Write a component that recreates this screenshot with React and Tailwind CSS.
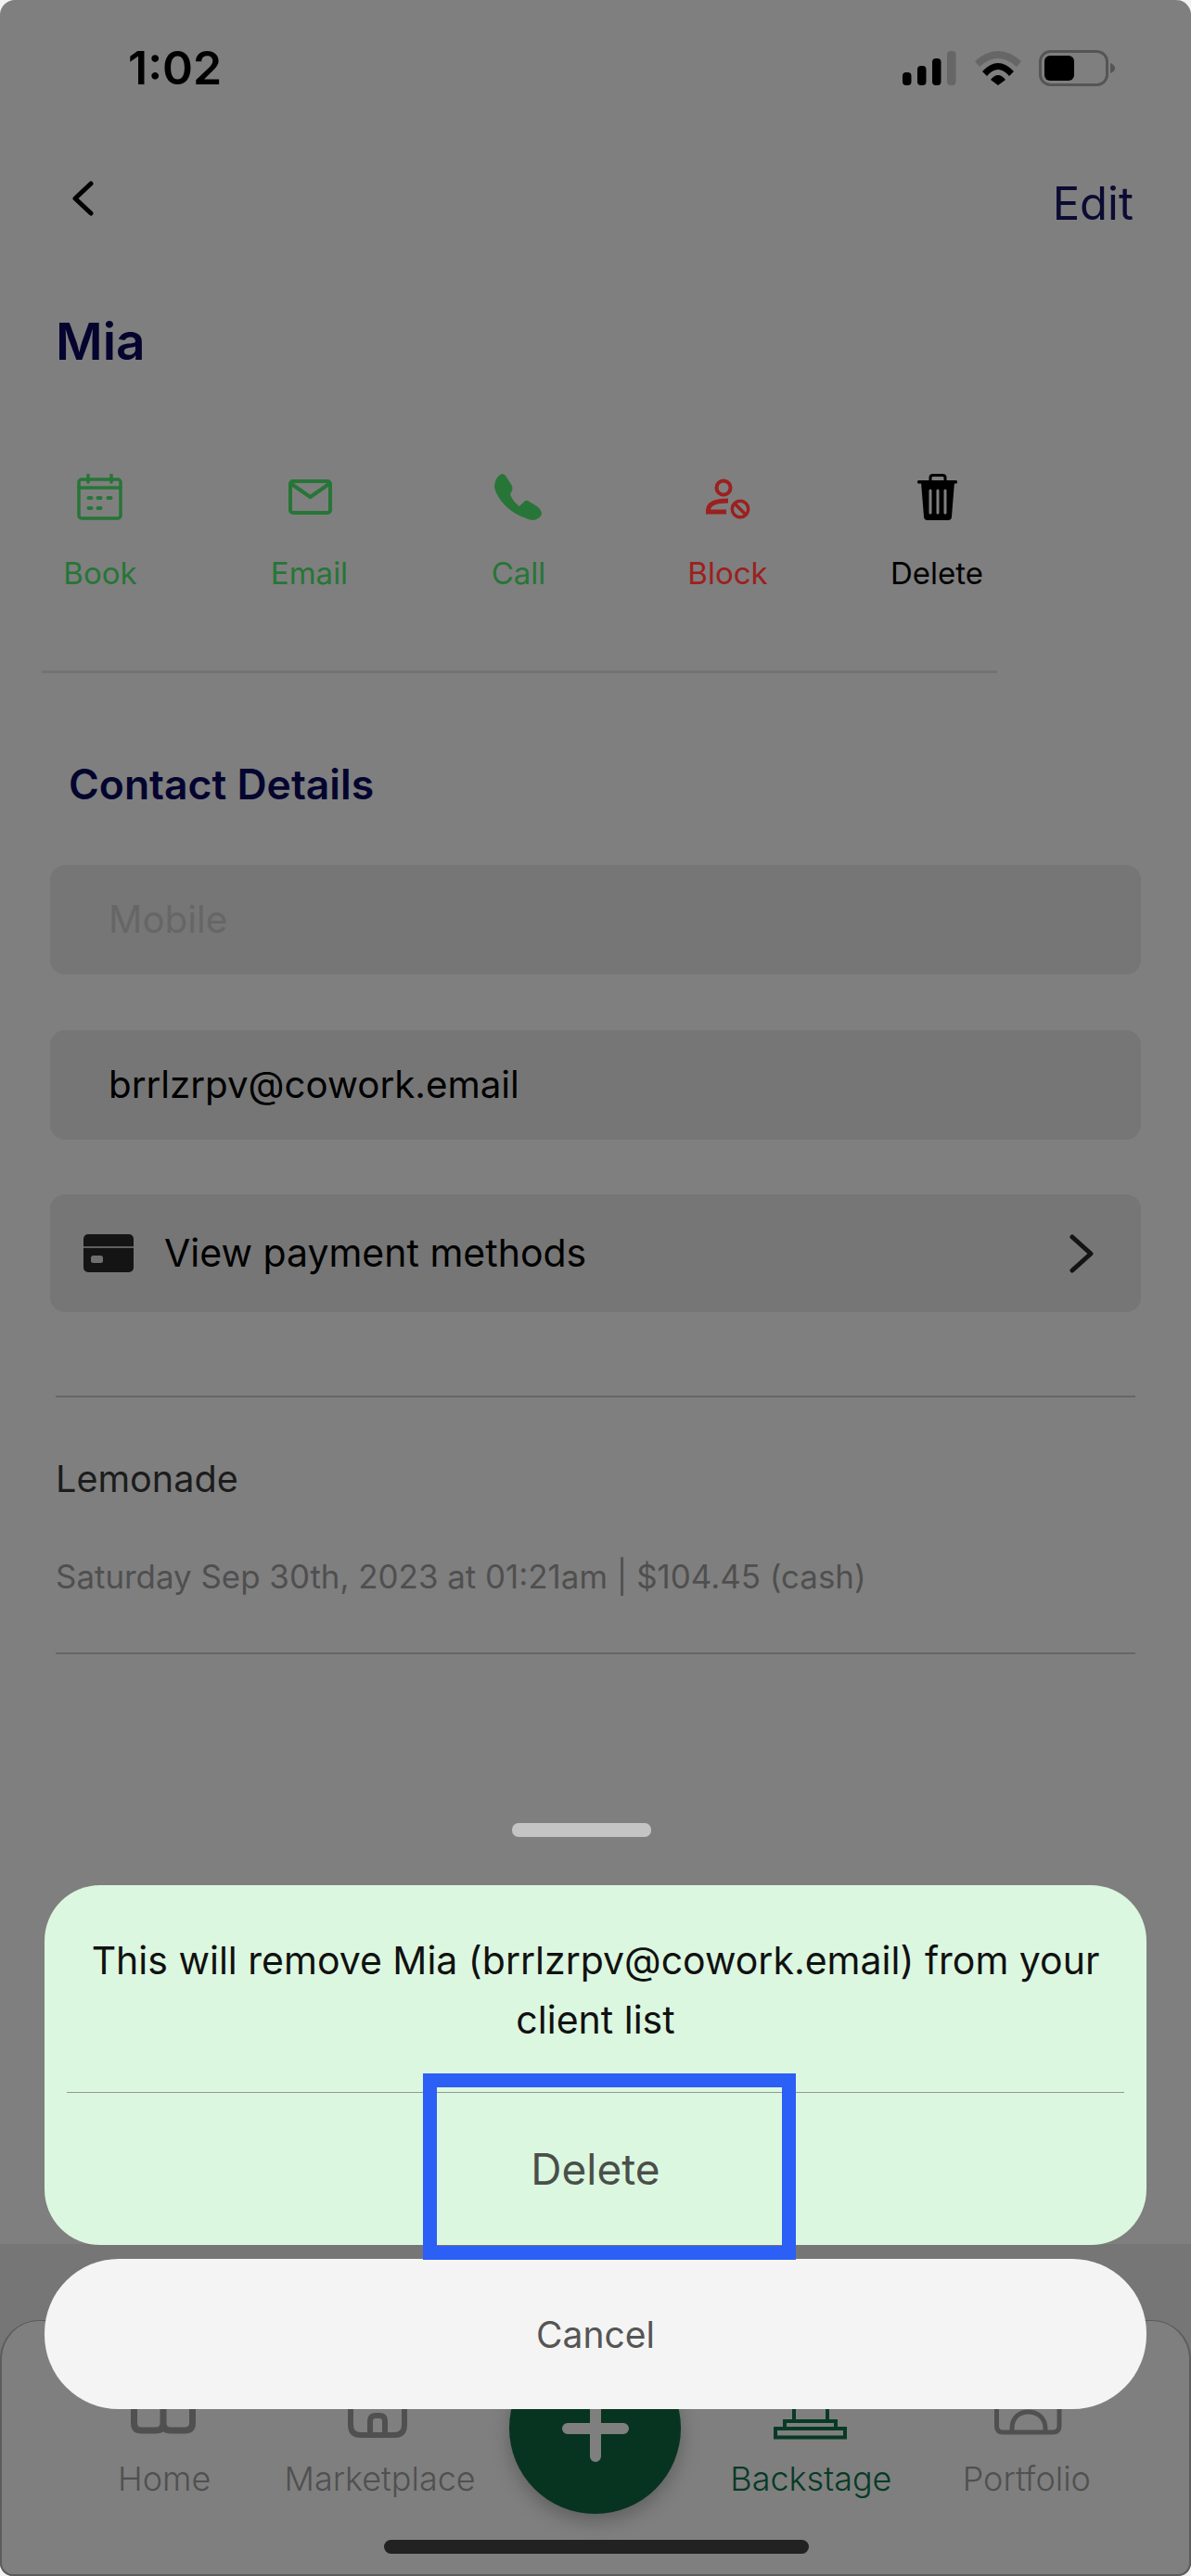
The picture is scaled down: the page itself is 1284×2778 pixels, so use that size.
const font = { fontFamily: "Inter, 'Noto Sans', sans-serif" };

function Signal() {
  return (
    <svg width="58" height="37" viewBox="0 0 58 37">
      <rect x="0" y="23" width="9.5" height="14" rx="4" fill="#000" />
      <rect x="16" y="16" width="9.5" height="21" rx="4" fill="#000" />
      <rect x="32" y="8" width="9.5" height="29" rx="4" fill="#000" />
      <rect x="48" y="0" width="9.5" height="37" rx="4" fill="#666" />
    </svg>
  );
}
function Wifi() {
  return (
    <svg width="50" height="37" viewBox="0 0 50 37">
      <path d="M0 11Q25 -11 50 11L45 17Q25 -1 5 17Z" fill="#666" />
      <path d="M8 22Q25 4 42 22L37 27Q25 13 13 27Z" fill="#000" />
      <path d="M17 31Q25 21 33 31L25 37Z" fill="#000" />
    </svg>
  );
}
function Battery() {
  return (
    <svg width="83" height="39" viewBox="0 0 83 39">
      <rect x="1.5" y="1.5" width="72" height="36" rx="11" fill="none" stroke="#555" strokeWidth="3" />
      <rect x="6" y="6" width="32" height="27" rx="6" fill="#000" />
      <path d="M77 14Q82 16 82 19.5Q82 23 77 25Z" fill="#555" />
    </svg>
  );
}
function BookIcon() {
  return (
    <svg width="50" height="50" viewBox="0 0 50 50" fill="none" stroke="#277537" strokeWidth="3.5" strokeLinecap="round">
      <rect x="2" y="6" width="45" height="42" rx="3" />
      <path d="M12 1V9M37 1V9M2 15H47" />
      <path d="M12.500 26H15.500M22.500 26H25.500M33.500 26H36.500M12.500 37H15.500M22.500 37H25.500" strokeWidth="4" />
    </svg>
  );
}
function EmailIcon() {
  return (
    <svg width="50" height="50" viewBox="0 0 50 50" fill="none" stroke="#277537" strokeWidth="4">
      <rect x="4" y="8" width="43" height="34" rx="3" />
      <path d="M4 10L25.5 25L47 10" />
    </svg>
  );
}
function CallIcon() {
  return (
    <svg width="52" height="50" viewBox="0 0 52 50">
      <path d="M8 0Q1 3 0 13C1 25 16 42 32 47Q37 50 42 50C47 49 51 46 51 42Q50 38 46 35L36 29Q33 28 31 31L27 35Q19 29 17 22L19 18Q20 16 19 13L12 2Q10 0 8 0Z" fill="#277537" />
    </svg>
  );
}
function BlockIcon() {
  return (
    <svg width="50" height="50" viewBox="0 0 50 50" fill="none" stroke="#9b2020">
      <circle cx="20" cy="15" r="7.5" strokeWidth="4" />
      <path d="M25 29Q4 29 3.5 39V41H23" strokeWidth="5" />
      <circle cx="38" cy="38" r="8.7" strokeWidth="3.5" />
      <path d="M32 32L44 44" strokeWidth="3.5" />
    </svg>
  );
}
function TrashIcon() {
  return (
    <svg width="50" height="50" viewBox="0 0 50 50">
      <path d="M18 8V4Q18 1.5 21 1.5H31Q34 1.5 34 4V8" fill="none" stroke="#000" strokeWidth="3" />
      <rect x="4" y="7" width="43" height="3.5" rx="1.5" fill="#000" />
      <path d="M8 9H44L41 46Q41 50 37 50H15Q11 50 11 46Z" fill="#000" />
      <path d="M18 18V42M26 18V42M34 18V42" stroke="#7f7f7f" strokeWidth="3" strokeLinecap="round" />
    </svg>
  );
}
function CardIcon() {
  return (
    <svg width="54" height="41" viewBox="0 0 54 41">
      <rect x="0" y="0" width="54" height="41" rx="5" fill="#141414" />
      <rect x="0" y="13" width="54" height="2" fill="#5f5f5f" />
      <rect x="8" y="23" width="13" height="8" rx="2.5" fill="#6f6f6f" />
    </svg>
  );
}
function HomeIcon() {
  return (
    <svg width="76" height="40" viewBox="0 0 76 40" fill="none" stroke="#505050" strokeWidth="7">
      <path d="M5.5 0V22Q5.5 30 13.5 30H29Q37 30 37 22V4M37 22Q37 30 45 30H60Q68.5 30 68.5 22V0" />
    </svg>
  );
}
function MarketIcon() {
  return (
    <svg width="76" height="40" viewBox="0 0 76 40" fill="none" stroke="#505050" strokeWidth="6">
      <path d="M6 0V24Q6 35 17 35H53Q64 35 64 24V0" />
      <path d="M27 35V20Q27 14 33 14H37Q43 14 43 20V35" />
    </svg>
  );
}
function BackstageIcon() {
  return (
    <svg width="84" height="40" viewBox="0 0 84 40" fill="none" stroke="#073a26" strokeWidth="4">
      <rect x="4" y="28" width="75" height="9.5" />
      <rect x="14" y="20" width="55" height="8" />
      <path d="M24 0V20M60 0V20" />
    </svg>
  );
}
function PortfolioIcon() {
  return (
    <svg width="76" height="40" viewBox="0 0 76 40" fill="none" stroke="#505050" strokeWidth="5">
      <path d="M5.5 0V25Q5.5 32 12 32H66Q73 32 73 25V0" />
      <path d="M22 32V28C22 15 31 10 39.500 10C48 10 58 15 58 28V32" />
    </svg>
  );
}

function Action({ label, color, children }) {
  return (
    <div className="flex w-[100px] flex-col items-center">
      <div className="flex h-[50px] items-center justify-center">{children}</div>
      <div className={`mt-[37px] whitespace-nowrap text-[33px] leading-[40px] ${color}`}>{label}</div>
    </div>
  );
}

function Tab({ label, color, children }) {
  return (
    <div className="flex flex-col items-center pt-[88px]">
      <div className="flex h-[40px] items-start justify-center">{children}</div>
      <div className={`mt-[20px] whitespace-nowrap text-[36px] font-light leading-[44px] ${color}`}>{label}</div>
    </div>
  );
}

export default function App() {
  return (
    <div className="relative h-[2778px] w-[1284px] overflow-hidden bg-[#f2f2f2]" style={font}>
      <div className="flex h-full flex-col overflow-hidden rounded-t-[16px] rounded-b-[14px] bg-[#7f7f7f]">
        <div className="flex h-[146px] items-center justify-between pl-[138px] pr-[81px]">
          <div className="text-[50px] font-semibold leading-none text-black">1:02</div>
          <div className="flex items-center gap-[19.5px]">
            <Signal />
            <Wifi />
            <Battery />
          </div>
        </div>

        <div className="flex h-[146px] items-center justify-between pl-[76px] pr-[62px]">
          <svg className="-mt-[10px]" width="26" height="38" viewBox="0 0 26 38" fill="none" stroke="#000" strokeWidth="5" strokeLinecap="round" strokeLinejoin="round">
            <path d="M22 3L5 19L22 35" />
          </svg>
          <div className="mt-[2px] text-[49px] leading-[60px] text-[#0b0b33]">Edit</div>
        </div>

        <div className="mt-[46px] pl-[60px] text-[55px] font-semibold leading-[60px] text-[#04042f]">Mia</div>

        <div className="mt-[113px] flex gap-[125.5px] pl-[58px]">
          <Action label="Book" color="text-[#277537]"><BookIcon /></Action>
          <Action label="Email" color="text-[#277537]"><EmailIcon /></Action>
          <Action label="Call" color="text-[#277537]"><CallIcon /></Action>
          <Action label="Block" color="text-[#9b2020]"><BlockIcon /></Action>
          <Action label="Delete" color="text-black"><TrashIcon /></Action>
        </div>

        <div className="ml-[45px] mt-[85px] h-[3px] w-[1030px] bg-[#737373]" />

        <div className="ml-[74px] mt-[95px] text-[44.500px] font-semibold leading-[50px] text-[#04042f]">Contact Details</div>

        <div className="ml-[54px] mt-[62px] flex h-[118px] w-[1176px] items-center rounded-[16px] bg-[#767676] pl-[63px] text-[40.3px] text-[#666666]">Mobile</div>
        <div className="ml-[54px] mt-[60px] flex h-[118px] w-[1176px] items-center rounded-[16px] bg-[#767676] pl-[63px] text-[40.3px] text-black">brrlzrpv@cowork.email</div>
        <div className="ml-[54px] mt-[59px] flex h-[127px] w-[1176px] items-center rounded-[16px] bg-[#767676] pl-[36px] pr-[50px] text-[41px] text-black">
          <CardIcon />
          <span className="ml-[33px] flex-1">View payment methods</span>
          <svg width="28" height="42" viewBox="0 0 28 42" fill="none" stroke="#141414" strokeWidth="5" strokeLinecap="round" strokeLinejoin="round">
            <path d="M4 3L24 21L4 39" />
          </svg>
        </div>

        <div className="ml-[60px] mt-[90px] h-[2px] w-[1164px] bg-[#666666]" />
        <div className="ml-[60px] mt-[63px] text-[39.600px] leading-[50px] text-[#1c1c1c]">Lemonade</div>
        <div className="ml-[60px] mt-[55px] text-[34.9px] leading-[50px] text-[#4f4f4f]">Saturday Sep 30th, 2023 at 01:21am | $104.45 (cash)</div>
        <div className="ml-[60px] mt-[57px] h-[2px] w-[1164px] bg-[#666666]" />

        <div className="mt-auto bg-[#767676] pt-[82px]">
          <div className="grid h-[276px] grid-cols-5 rounded-t-[42px] rounded-b-[14px] border-[2px] border-t-[1px] border-[#5c5c5c] bg-[#7f7f7f] px-[59px]">
            <Tab label="Home" color="text-[#505050]"><HomeIcon /></Tab>
            <Tab label="Marketplace" color="text-[#505050]"><MarketIcon /></Tab>
            <div className="flex justify-center pt-[23px]">
              <div className="flex h-[185px] w-[185px] items-center justify-center rounded-full bg-[#073420] shadow-[0_8px_20px_rgba(0,0,0,0.25)]">
                <svg width="72" height="72" viewBox="0 0 72 72" stroke="#7f7f7f" strokeWidth="12" strokeLinecap="round">
                  <path d="M6 36H66M36 6V66" />
                </svg>
              </div>
            </div>
            <Tab label="Backstage" color="text-[#073a26]"><BackstageIcon /></Tab>
            <Tab label="Portfolio" color="text-[#505050]"><PortfolioIcon /></Tab>
          </div>
        </div>
      </div>

      <div className="absolute bottom-[24px] left-[414px] h-[15px] w-[458px] rounded-full bg-[#222222]" />

      <div className="absolute left-[48px] top-[1966px] flex w-[1188px] flex-col items-center">
        <div className="ml-[-30px] h-[15px] w-[150px] rounded-[7px] bg-[#c4c4c4]" />
        <div className="mt-[52px] flex h-[388px] w-full flex-col items-center rounded-[60px] bg-[#dcf7e0] px-[24px]">
          <div className="h-[223px] pt-[49px] text-center text-[41px] leading-[64px] text-[#111111]">
            This will remove Mia (brrlzrpv@cowork.email) from your client list
          </div>
          <div className="h-px w-[1140px] bg-[#8f9a92]" />
          <div className="flex flex-1 items-center justify-center text-[46px] text-[#4a4f4a]">Delete</div>
        </div>
        <div className="mt-[15px] flex h-[162px] w-full items-center justify-center rounded-[80px] bg-[#f4f4f4] pt-[2px] text-[39px] text-[#555555]">Cancel</div>
      </div>

      <div className="absolute left-[456px] top-[2236px] h-[201px] w-[402px] border-[15px] border-[#2b5ff5]" />
    </div>
  );
}
